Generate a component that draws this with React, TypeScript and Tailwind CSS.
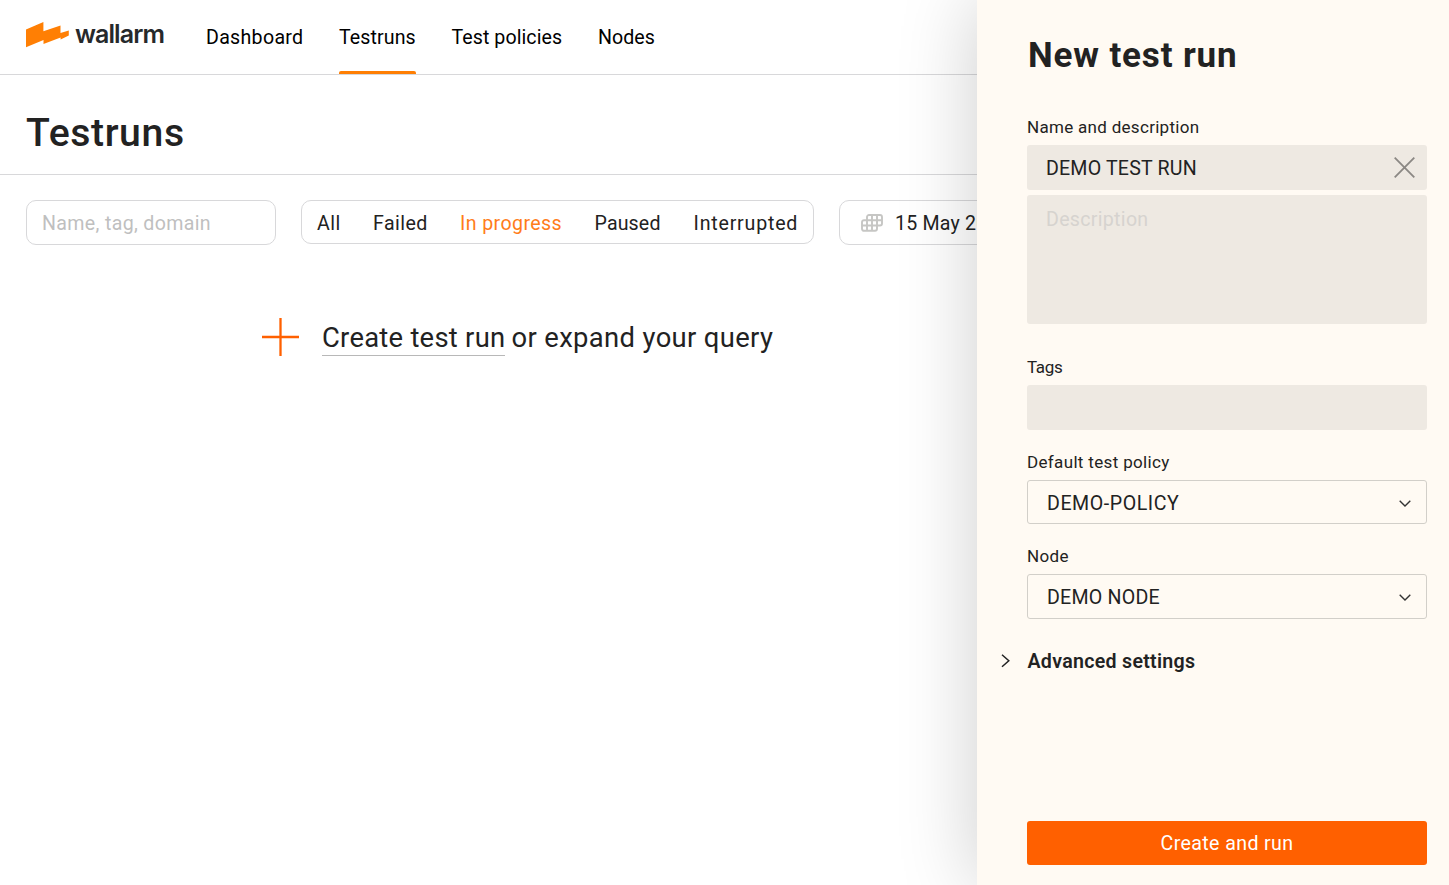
import type { ReactNode } from "react";

const navItems = [
  { label: "Dashboard", active: false, className: "w-[98px] tracking-[0.3px]" },
  { label: "Testruns", active: true, className: "ml-[35px] w-[77px] tracking-[0.097px]" },
  { label: "Test policies", active: false, className: "ml-[35.500px] w-[110px] tracking-[0.07px]" },
  { label: "Nodes", active: false, className: "ml-[36.500px] w-[57px] tracking-[0.027px]" },
];

const filters = [
  { label: "All", className: "w-[24px] tracking-[0.477px] text-[#222]" },
  { label: "Failed", className: "ml-8 w-[55px] tracking-[0.424px] text-[#222]" },
  { label: "In progress", className: "ml-8 w-[102px] tracking-[0.4px] text-[#ff7d1a]" },
  { label: "Paused", className: "ml-[32.500px] w-[66px] tracking-[0.136px] text-[#222]" },
  { label: "Interrupted", className: "ml-[33px] w-[105px] tracking-[0.8px] text-[#222]" },
];

function Logo() {
  return (
    <div className="flex h-[26px] items-start">
      <svg className="h-[26px] w-[43px]" viewBox="0 0 43 26" fill="#ff7f04">
        <path d="M0 7.4 17.4 0v9.200L34.5 3.400v7.700L42.8 8.600v4.900L34.600 17.6v-2.200L17.5 22v-4L0 25.2Z" />
      </svg>
      <span className="-mt-px ml-[6px] font-[Inter,sans-serif] text-[25px] leading-[26px] font-semibold tracking-[-0.917px] text-[#26292b]">
        wallarm
      </span>
    </div>
  );
}

function CalendarIcon() {
  return (
    <svg className="h-[18px] w-[22px]" viewBox="0 0 22 18" fill="none" stroke="#c6c6c4" strokeWidth="1.9">
      <path d="M6 6V3a2 2 0 0 1 2-2h11a2 2 0 0 1 2 2v6.500a2 2 0 0 1-2 2h-3" />
      <path d="M3 6.200h13v8.600a2 2 0 0 1-2 2H3a2 2 0 0 1-2-2V8.200a2 2 0 0 1 2-2Z" />
      <path d="M6 6v11M11 1v16M16 1v8M16 6.200h5M1 11.500h15" />
    </svg>
  );
}

function ChevronDown() {
  return (
    <svg className="mt-[2px] h-[7px] w-[12px]" viewBox="0 0 12 7" fill="none" stroke="#333" strokeWidth="1.4">
      <path d="M0.700 0.800 6 6 11.300 0.800" />
    </svg>
  );
}

function Label({ children, className }: { children: ReactNode; className: string }) {
  return <div className={"mb-[7px] h-[22px] text-[17px] leading-[22px] whitespace-nowrap " + className}>{children}</div>;
}

function Select({ children, className }: { children: ReactNode; className: string }) {
  return (
    <div className={"flex items-center justify-between rounded-[3px] border border-[#d2cfc9] pr-[15.500px] pl-[19px] " + className}>
      {children}
      <ChevronDown />
    </div>
  );
}

function Drawer() {
  return (
    <aside className="absolute inset-y-0 right-0 flex w-[472px] flex-col bg-[#fffaf3] pt-[34px] pr-[22px] pb-5 pl-[50px] shadow-[0_0_75px_rgba(0,0,0,0.2)]">
      <h2 className="ml-px h-11 text-[35px] leading-[44px] font-bold tracking-[0.85px] whitespace-nowrap">New test run</h2>

      <Label className="mt-[38px] tracking-[0.3px]">Name and description</Label>
      <div className="flex h-[45px] items-center justify-between rounded-[3px] bg-[#eee9e2] pr-3 pl-[19px]">
        <span className="pt-[2px] tracking-[0.18px]">DEMO TEST RUN</span>
        <svg className="h-[21px] w-[21px]" viewBox="0 0 21 21" fill="none" stroke="#8b8884" strokeWidth="1.8">
          <path d="M0.700 0.700 20.300 20.300M20.300 0.700 0.700 20.300" />
        </svg>
      </div>
      <div className="mt-[5px] h-[129px] rounded-[3px] bg-[#eee9e2] pt-3 pl-[19px] leading-[25px] tracking-[0.3px] text-[#d6d3cf]">
        Description
      </div>

      <Label className="mt-8 tracking-[-0.35px]">Tags</Label>
      <div className="h-[45px] rounded-[3px] bg-[#eee9e2]" />

      <Label className="mt-[21px] tracking-[0.34px]">Default test policy</Label>
      <Select className="h-11">
        <span className="pt-[3px] tracking-[0.553px]">DEMO-POLICY</span>
      </Select>

      <Label className="mt-[21px] tracking-[0.4px]">Node</Label>
      <Select className="h-[45px]">
        <span className="pt-[2px] tracking-[0.23px]">DEMO NODE</span>
      </Select>

      <div className="mt-[31px] -ml-[26px] flex h-[22px] items-center">
        <svg className="h-[14px] w-[9px]" viewBox="0 0 9 14" fill="none" stroke="#222" strokeWidth="1.5">
          <path d="M1 0.800 7.800 6.800 1 12.800" />
        </svg>
        <span className="ml-[17.500px] pt-[2px] font-semibold tracking-[0.289px]">Advanced settings</span>
      </div>

      <button className="mt-auto h-11 rounded-[3px] bg-[#ff6000] pt-[2px] tracking-[0.389px] text-white">Create and run</button>
    </aside>
  );
}

export default function App() {
  return (
    <div className="relative h-[885px] overflow-hidden bg-white font-[Roboto,sans-serif] text-[19.6px] leading-[26px] text-[#222]">
      <header className="flex h-[75px] items-stretch border-b border-[#d8d8da] pl-[26px]">
        <div className="w-[180px] pt-[22px]">
          <Logo />
        </div>
        <nav className="flex text-black">
          {navItems.map((item) => (
            <div key={item.label} className={"flex flex-col justify-between whitespace-nowrap " + item.className}>
              <span className="pt-[25px]">{item.label}</span>
              {item.active && <span className="h-[3px] rounded-t-[2px] bg-[#ff7f04]" />}
            </div>
          ))}
        </nav>
      </header>

      <div className="h-[100px] border-b border-[#d8d8da] pt-[38px] pl-[26px]">
        <h1 className="text-[39.2px] leading-[40px] font-medium tracking-[0.6px]">Testruns</h1>
      </div>

      <main>
        <div className="flex items-start pt-[25px] pl-[26px] whitespace-nowrap">
          <div className="flex h-[45px] w-[250px] shrink-0 items-center rounded-[10px] border border-[#d8d8da] pt-[2px] pl-[15px] tracking-[0.33px] text-[#bfbfbf]">
            Name, tag, domain
          </div>
          <div className="ml-[25px] flex h-[44px] w-[513px] shrink-0 items-center rounded-[10px] border border-[#d8d8da] pt-[3px] pl-[15px]">
            {filters.map((f) => (
              <span key={f.label} className={f.className}>
                {f.label}
              </span>
            ))}
          </div>
          <div className="ml-[25px] flex h-[45px] w-[320px] shrink-0 items-center rounded-[10px] border border-[#d8d8da] pl-[21px]">
            <CalendarIcon />
            <span className="ml-3 pt-[2px] tracking-[0.209px]">15 May 2023</span>
          </div>
        </div>

        <div className="mt-[73px] flex h-[38px] items-center pl-[262px] text-[27.4px] leading-[40px] whitespace-nowrap">
          <svg className="h-[38px] w-[37px]" viewBox="0 0 37 38" fill="none" stroke="#ff6000" strokeWidth="2.3">
            <path d="M0 19H37M18.500 0V38" />
          </svg>
          <span className="ml-[23px] h-[38px] w-[183px] border-b border-[#b8b8b8] tracking-[0.263px]">Create test run</span>
          <span className="ml-[6.500px] h-[38px] tracking-[0.356px]">or expand your query</span>
        </div>
      </main>

      <Drawer />
    </div>
  );
}
